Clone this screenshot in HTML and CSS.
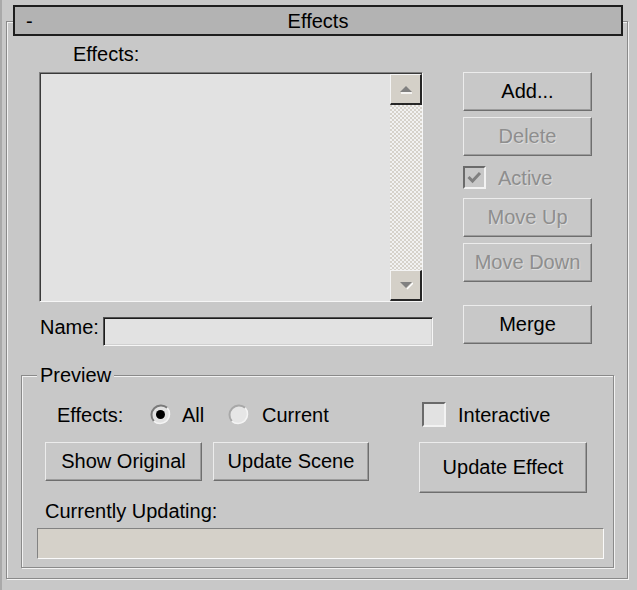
FILE: index.html
```html
<!DOCTYPE html>
<html>
<head>
<meta charset="utf-8">
<link rel="stylesheet" href="styles.css">
</head>
<body>
<div class="rollout">
  <div class="title">
    <span class="collapse">-</span>
    <span class="title-text">Effects</span>
    <span></span>
  </div>
  <div class="frame">
    <div class="top">
      <div class="left">
        <div class="lbl lbl-effects">Effects:</div>
        <div class="listbox">
          <div class="list-area"></div>
          <div class="scrollbar">
            <div class="sbtn">
              <svg width="14" height="9" viewBox="0 0 14 9"><path d="M2 8 L13 8" stroke="#ffffff" stroke-width="1.5"/><path d="M1 7 L7 1 L13 7 Z" fill="#808080"/></svg>
            </div>
            <div class="track"></div>
            <div class="sbtn">
              <svg width="14" height="9" viewBox="0 0 14 9"><path d="M8 8 L14 2" stroke="#ffffff" stroke-width="1.5"/><path d="M1 1 L13 1 L7 7 Z" fill="#808080"/></svg>
            </div>
          </div>
        </div>
        <div class="name-row">
          <span class="lbl name-lbl">Name:</span>
          <div class="textbox"></div>
        </div>
      </div>
      <div class="right">
        <button class="btn">Add...</button>
        <button class="btn disabled delete">Delete</button>
        <div class="check-row disabled active-row">
          <span class="checkbox small dis">
            <svg width="19" height="19" viewBox="0 0 19 19"><path d="M3.5 9 L7.5 13 L15 5" fill="none" stroke="#808080" stroke-width="3"/></svg>
          </span>
          <span class="check-text">Active</span>
        </div>
        <button class="btn disabled moveup">Move Up</button>
        <button class="btn disabled movedown">Move Down</button>
        <button class="btn merge">Merge</button>
      </div>
    </div>
    <div class="group">
      <div class="legend">Preview</div>
      <div class="row-a">
        <span class="lbl pv-lbl">Effects:</span>
        <span class="opt opt1">
          <svg class="radio" width="21" height="21" viewBox="0 0 21 21">
            <circle cx="10.5" cy="10.5" r="9.5" fill="#e2e2e2"/>
            <path d="M3.8 17.2 A9.5 9.5 0 0 1 17.2 3.8" fill="none" stroke="#7a7a7a" stroke-width="2"/>
            <path d="M17.2 3.8 A9.5 9.5 0 0 1 3.8 17.2" fill="none" stroke="#f4f4f4" stroke-width="1.5"/>
            <circle cx="10.5" cy="10.5" r="4.5" fill="#000"/>
          </svg>
          <span class="opt-text">All</span>
        </span>
        <span class="opt opt2">
          <svg class="radio" width="21" height="21" viewBox="0 0 21 21">
            <circle cx="10.5" cy="10.5" r="9.5" fill="#e6e6e6"/>
            <path d="M3.8 17.2 A9.5 9.5 0 0 1 17.2 3.8" fill="none" stroke="#a8a8a8" stroke-width="2"/>
            <path d="M17.2 3.8 A9.5 9.5 0 0 1 3.8 17.2" fill="none" stroke="#f4f4f4" stroke-width="1.5"/>
          </svg>
          <span class="opt-text cur-text">Current</span>
        </span>
        <span class="check-row inter-row">
          <span class="checkbox big"></span>
          <span class="check-text">Interactive</span>
        </span>
      </div>
      <div class="row-b">
        <button class="btn show-orig">Show Original</button>
        <button class="btn upd-scene">Update Scene</button>
        <button class="btn upd-effect">Update Effect</button>
      </div>
      <div class="lbl cur-lbl">Currently Updating:</div>
      <div class="progress"></div>
    </div>
  </div>
</div>
</body>
</html>
```

FILE: styles.css
```css
* { box-sizing: border-box; }

html, body {
  margin: 0;
  padding: 0;
}

body {
  width: 637px;
  height: 590px;
  overflow: hidden;
  background: linear-gradient(to right, #a9a9a9 0 2px, #c8c8c8 2px);
  font-family: "Liberation Sans", Arial, sans-serif;
  font-size: 20px;
  line-height: 24px;
  color: #000;
}

.rollout {
  padding-top: 5px;
}

.title {
  position: relative;
  z-index: 1;
  margin-left: 13px;
  width: 610px;
  height: 31px;
  border: 2px solid #1e1e1e;
  background: #b3b3b3;
  display: grid;
  grid-template-columns: 1fr auto 1fr;
  align-items: center;
}

.collapse {
  padding-left: 11px;
  line-height: 24px;
}

.title-text {
  line-height: 24px;
}

.frame {
  margin: -15px 0 0 6px;
  width: 622px;
  height: 558px;
  border: 1px solid #8a8a8a;
  box-shadow: inset 1px 1px 0 #f2f2f2, 1px 1px 0 #f2f2f2;
  padding-top: 20px;
}

.top {
  display: flex;
  margin-left: 32px;
}

.left {
  width: 394px;
  display: flex;
  flex-direction: column;
}

.lbl {
  height: 24px;
  white-space: nowrap;
}

.lbl-effects {
  margin-left: 34px;
}

.listbox {
  margin-top: 6px;
  width: 384px;
  height: 230px;
  display: flex;
  border: 1px solid;
  border-color: #808080 #f6f6f6 #f6f6f6 #808080;
  box-shadow: inset 1px 1px 0 #3a3a3a;
  background: #e2e2e2;
  padding: 1px 0 0 1px;
}

.list-area {
  flex: 1;
}

.scrollbar {
  width: 32px;
  display: flex;
  flex-direction: column;
}

.sbtn {
  height: 31px;
  background: #d4d0c8;
  border-top: 1px solid #f4f4f4;
  border-left: 1px solid #f4f4f4;
  border-right: 2px solid #262626;
  border-bottom: 2px solid #262626;
  display: flex;
  align-items: center;
  justify-content: center;
}

.track {
  flex: 1;
  background-color: #d6d2ca;
  background-image: conic-gradient(#f2f2f2 25%, #d6d2ca 0 50%, #f2f2f2 0 75%, #d6d2ca 0);
  background-size: 4px 4px;
}

.name-row {
  margin-top: 15px;
  display: flex;
  align-items: flex-start;
}

.name-lbl {
  width: 64px;
  margin-top: -2px;
  padding-left: 1px;
}

.textbox {
  width: 330px;
  height: 29px;
  background: #e2e2e2;
  border: 1px solid;
  border-color: #505050 #f6f6f6 #f6f6f6 #505050;
  box-shadow: inset 1px 1px 0 #1c1c1c, inset -1px -1px 0 #d0d0d0;
}

.right {
  margin-left: 30px;
  width: 129px;
  padding-top: 30px;
  display: flex;
  flex-direction: column;
}

.btn {
  font: inherit;
  color: #000;
  height: 39px;
  padding: 0 0 2px 0;
  margin: 0;
  background: #c8c8c8;
  border: 1px solid;
  border-color: #ececec #6e6e6e #6e6e6e #ececec;
  box-shadow: inset -1px -1px 0 #9c9c9c;
  white-space: nowrap;
  cursor: default;
}

.btn.disabled {
  color: #8e8e8e;
  text-shadow: 1px 1px 0 #dcdcdc;
}

.right .btn {
  width: 129px;
}

.delete { margin-top: 6px; }
.moveup { margin-top: 9px; }
.movedown { margin-top: 6px; }
.merge { margin-top: 23px; }

.check-row {
  display: flex;
  align-items: center;
  white-space: nowrap;
}

.active-row {
  margin-top: 10px;
  height: 23px;
  color: #8e8e8e;
  text-shadow: 1px 1px 0 #dcdcdc;
}

.checkbox {
  display: flex;
  align-items: center;
  justify-content: center;
  border: 2px solid;
  border-color: #6a6a6a #f2f2f2 #f2f2f2 #6a6a6a;
  background: #e2e2e2;
}

.checkbox.small {
  width: 23px;
  height: 23px;
  margin-right: 12px;
}

.checkbox.dis {
  background: #c8c8c8;
}

.checkbox.big {
  width: 24px;
  height: 25px;
  margin-right: 12px;
}

.group {
  margin: 29px 0 0 14px;
  width: 593px;
  height: 193px;
  border: 1px solid #8a8a8a;
  box-shadow: inset 1px 1px 0 #f2f2f2, 1px 1px 0 #f2f2f2;
  display: flex;
  flex-direction: column;
}

.legend {
  align-self: flex-start;
  margin: -13px 0 0 15px;
  padding: 0 3px;
  background: #c8c8c8;
  height: 24px;
}

.row-a {
  margin-top: 15px;
  height: 25px;
  padding-left: 35px;
  display: flex;
  align-items: center;
}

.pv-lbl {
  width: 93px;
}

.opt {
  display: flex;
  align-items: center;
  white-space: nowrap;
}

.opt1 { width: 78px; }
.opt2 { width: 194px; }

.radio {
  flex: none;
  margin-right: 11px;
}

.cur-text {
  margin-left: 2px;
}

.row-b {
  margin-top: 15px;
  padding-left: 23px;
  display: flex;
  align-items: flex-start;
}

.show-orig { width: 157px; }
.upd-scene { width: 156px; margin-left: 11px; }
.upd-effect { width: 168px; height: 51px; margin-left: 50px; }

.cur-lbl {
  margin-top: 6px;
  padding-left: 23px;
}

.progress {
  margin: 5px 0 0 15px;
  width: 567px;
  height: 31px;
  background: #d5d1c9;
  border: 1px solid;
  border-color: #828282 #fafafa #fafafa #828282;
}
```
